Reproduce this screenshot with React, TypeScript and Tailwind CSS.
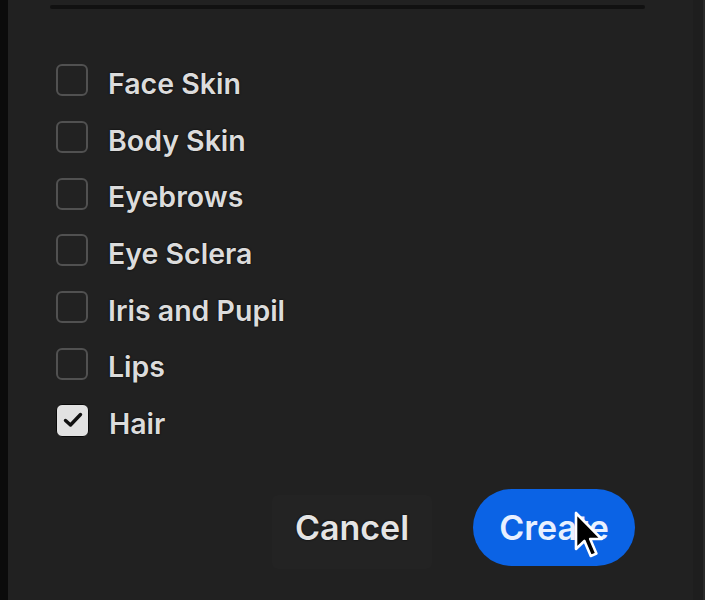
import React from "react";

const items = [
  { label: "Face Skin", checked: false },
  { label: "Body Skin", checked: false },
  { label: "Eyebrows", checked: false },
  { label: "Eye Sclera", checked: false },
  { label: "Iris and Pupil", checked: false },
  { label: "Lips", checked: false },
  { label: "Hair", checked: true },
];

const Pointer = () => (
  <svg
    width="32"
    height="52"
    viewBox="0 0 16 26"
    className="absolute left-[101px] top-[22px]"
  >
    <path
      d="M1 1 L1 19 L5.2 15 L8.4 22.5 L11.2 21.3 L8.1 14 L13.8 14 Z"
      fill="#000"
      stroke="#fff"
      strokeWidth="1.3"
      strokeLinejoin="round"
    />
  </svg>
);

const App = () => {
  return (
    <div
      className="flex w-[705px] h-[600px] bg-[#212121] overflow-hidden"
      style={{ fontFamily: "Inter, 'Liberation Sans', sans-serif" }}
    >
      <div className="w-[8px] h-full bg-[#0b0b0b]" />
      <div className="flex-1 flex flex-col">
        <div className="ml-[42px] mt-[5px] w-[595px] h-[4px] rounded-full bg-[#111111]" />

        <div className="ml-[48px] mt-[43px] flex flex-col">
          {items.map((item) => (
            <div key={item.label} className="flex items-center h-[56.67px]">
              {item.checked ? (
                <div className="w-[33px] h-[33px] rounded-[6px] bg-[#e2e2e2] border border-[#0a0a0a] flex items-center justify-center">
                  <svg width="24" height="24" viewBox="0 0 24 24">
                    <polyline
                      points="4.5,12.5 9.5,17 19.5,6.5"
                      fill="none"
                      stroke="#111"
                      strokeWidth="3.4"
                      strokeLinecap="round"
                      strokeLinejoin="round"
                    />
                  </svg>
                </div>
              ) : (
                <div className="w-[32px] h-[32px] rounded-[6px] border-[2px] border-[#515151] bg-[#222222]" />
              )}
              <span className="ml-[20px] mt-[8px] text-[28.5px] font-semibold text-[#dcdcdc] [text-shadow:0_0_2px_#000]">
                {item.label}
              </span>
            </div>
          ))}
        </div>

        <div className="flex justify-end items-start gap-[41px] mt-[40px] pr-[58px]">
          <button className="mt-[6px] w-[160px] h-[74px] pb-[8px] rounded-[6px] bg-[#232323] text-[34px] font-semibold text-[#e4e4e4] [text-shadow:0_0_2px_#000]">
            Cancel
          </button>
          <button className="relative w-[162px] h-[77px] rounded-full bg-[#0b63e5] text-[34px] font-semibold text-[#e8f0ff]">
            Create
            <Pointer />
          </button>
        </div>
      </div>
      <div className="w-[10px] h-full bg-[#1e1e1e]" />
      <div className="w-[2px] h-full bg-[#2a2a2a]" />
    </div>
  );
};

export default App;
